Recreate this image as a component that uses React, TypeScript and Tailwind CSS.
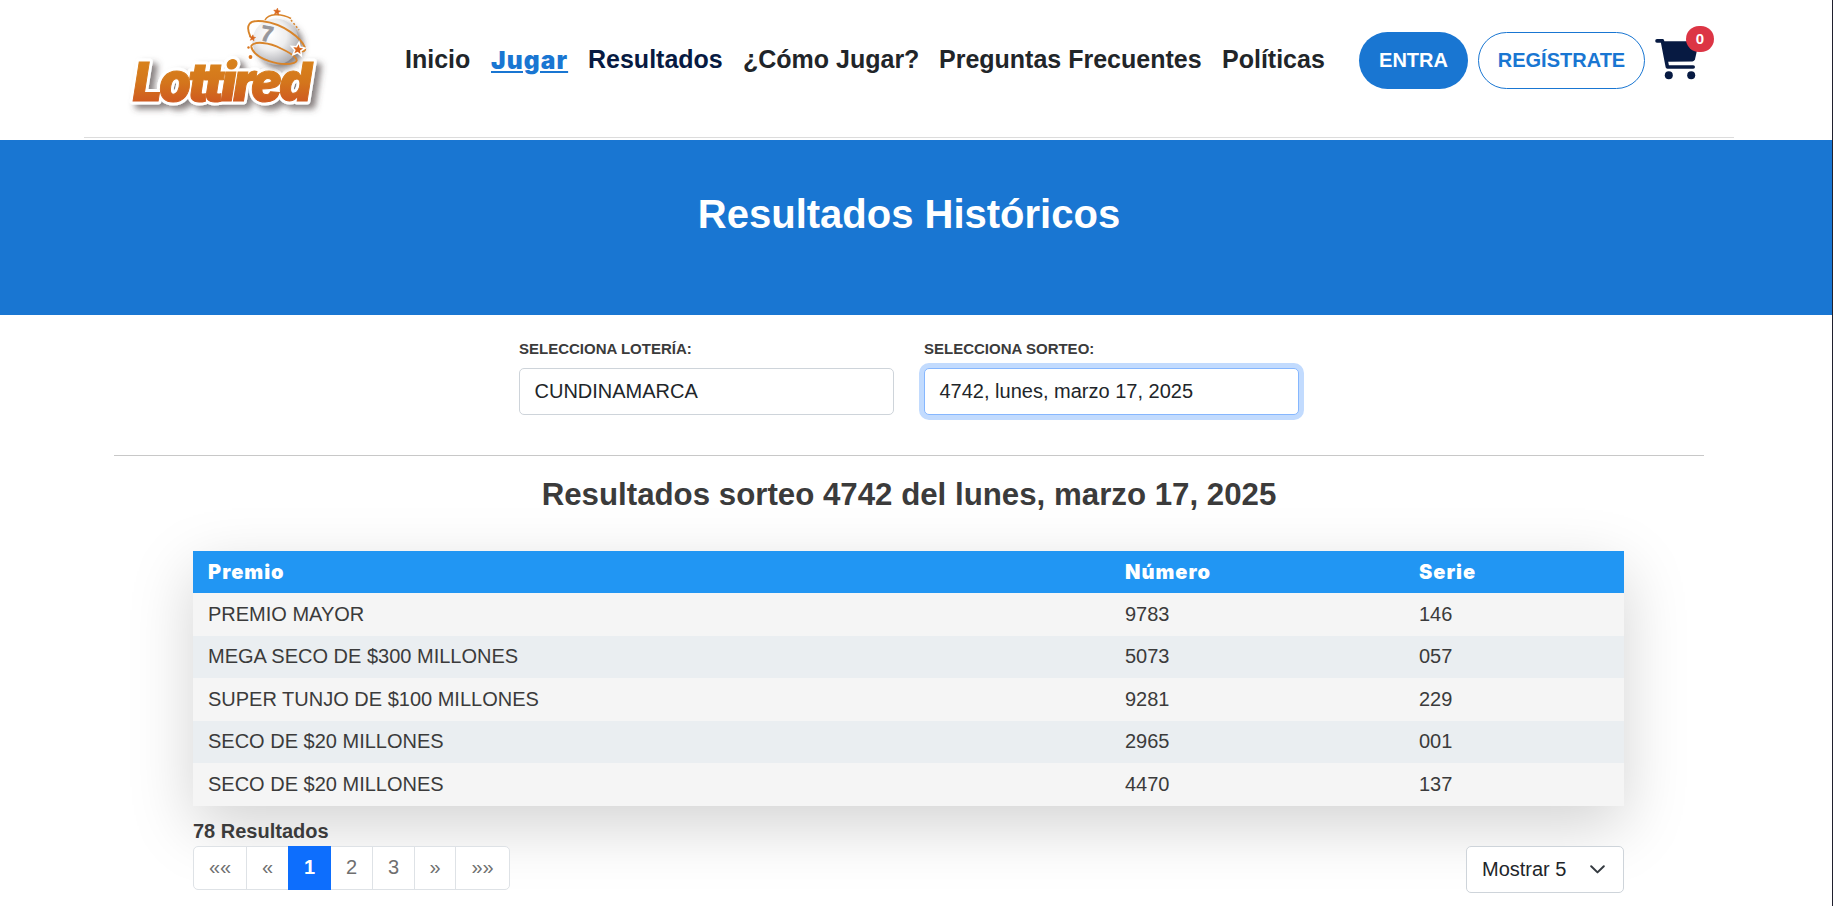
import React from "react";

type Row = { premio: string; numero: string; serie: string };

const rows: Row[] = [
  { premio: "PREMIO MAYOR", numero: "9783", serie: "146" },
  { premio: "MEGA SECO DE $300 MILLONES", numero: "5073", serie: "057" },
  { premio: "SUPER TUNJO DE $100 MILLONES", numero: "9281", serie: "229" },
  { premio: "SECO DE $20 MILLONES", numero: "2965", serie: "001" },
  { premio: "SECO DE $20 MILLONES", numero: "4470", serie: "137" },
];

function Star({ x, y, r, outline }: { x: number; y: number; r: number; outline?: boolean }) {
  return (
    <path
      transform={`translate(${x} ${y}) scale(${r}) rotate(8)`}
      d="M0-1 .26-.36 .95-.31 .42 .14 .59 .81 0 .45-.59 .81-.42 .14-.95-.31-.26-.36Z"
      fill="#d8661c"
      stroke={outline ? "#fff" : "#d8661c"}
      strokeWidth={outline ? 0.6 : 0.15}
      paintOrder="stroke"
    />
  );
}

function Logo() {
  return (
    <svg width="200" height="130" viewBox="128 0 200 130" className="shrink-0 overflow-visible" aria-label="Lottired">
      <defs>
        <linearGradient id="word" x1="0" y1="62" x2="0" y2="102" gradientUnits="userSpaceOnUse">
          <stop offset="0" stopColor="#d8821c" />
          <stop offset="0.5" stopColor="#d4761c" />
          <stop offset="1" stopColor="#cf5a20" />
        </linearGradient>
        <radialGradient id="ball" cx="0.4" cy="0.35" r="0.68">
          <stop offset="0" stopColor="#ffffff" />
          <stop offset="0.5" stopColor="#eeeeef" />
          <stop offset="1" stopColor="#adadb2" />
        </radialGradient>
        <filter id="soft" x="-20%" y="-30%" width="150%" height="180%">
          <feDropShadow dx="5" dy="4.5" stdDeviation="3" floodColor="#4a4040" floodOpacity="0.65" />
        </filter>
      </defs>
      <g filter="url(#soft)">
        <text
          x="133"
          y="100.8"
          textLength="176"
          lengthAdjust="spacingAndGlyphs"
          letterSpacing="-3"
          fontFamily="Inter"
          fontWeight="900"
          fontStyle="italic"
          fontSize="53.5"
          fill="#fff"
          stroke="#fff"
          strokeWidth="7"
          strokeLinejoin="round"
        >
          Lottired
        </text>
      </g>
      <g filter="url(#soft)">
        <circle cx="275.5" cy="41.5" r="23" fill="url(#ball)" />
      </g>
      <text
        x="133"
        y="100.8"
        textLength="176"
        lengthAdjust="spacingAndGlyphs"
        letterSpacing="-3"
        fontFamily="Inter"
        fontWeight="900"
        fontStyle="italic"
        fontSize="53.5"
        fill="url(#word)"
        stroke="url(#word)"
        strokeWidth="1"
      >
        Lottired
      </text>
      <text
        x="261"
        y="41.5"
        fontFamily="Liberation Sans"
        fontWeight="700"
        fontSize="22"
        fill="#97979c"
        stroke="#97979c"
        strokeWidth="0.8"
        transform="rotate(10 268 34)"
      >
        7
      </text>
      <g fill="none" stroke="#d8842a" strokeWidth="1.9">
        <path d="M250.5 37C245 25 249 19.5 263 21.3C284 24 301 38 305 47.5C306 51 303 52.5 299 50.5" />
        <path d="M251 46C254 41 269 42 281 48.5C296 55.5 300 61 294 62.8C282 66.5 254 60 251 46" />
        <path d="M265 20C268 14 280 12.5 291 18.5" strokeWidth="1.5" />
        <path d="M291 20L299 30" strokeDasharray="2 2" strokeWidth="1.5" />
      </g>
      <Star x={277} y={11.7} r={3.6} />
      <Star x={252.5} y={38} r={3.2} />
      <Star x={298} y={49.5} r={5.2} outline />
      <circle cx="250.5" cy="57" r="1.9" fill="#d8741c" />
      <circle cx="248.5" cy="47.5" r="1.2" fill="#d8741c" />
    </svg>
  );
}

function Cart() {
  return (
    <svg width="46" height="42" viewBox="0 0 46 42" className="block">
      <path
        d="M2 1.9H7.4L12.4 28H38.2"
        fill="none"
        stroke="#071a42"
        strokeWidth="3.6"
        strokeLinecap="round"
        strokeLinejoin="round"
      />
      <path d="M8 2.2H44L40 20.2Q39.4 22.2 37.4 22.4L12.5 22.8Z" fill="#071a42" />
      <circle cx="13.8" cy="36.2" r="4" fill="#071a42" />
      <circle cx="36.2" cy="36.2" r="4" fill="#071a42" />
    </svg>
  );
}

function Field({ label, value, focused }: { label: string; value: string; focused?: boolean }) {
  return (
    <div className="w-[375px]">
      <div className="h-[22px] text-[15px] leading-[22px] font-bold text-[#3b3b3b]">{label}</div>
      <div
        className={
          focused
            ? "mt-2 h-[47px] rounded-[5px] border border-[#86b7fe] bg-white px-[14.5px] text-[20px] leading-[45px] text-[#212529] shadow-[0_0_0_5px_#c2dbfe]"
            : "mt-2 h-[47px] rounded-[5px] border border-[#ced4da] bg-white px-[14.5px] text-[20px] leading-[45px] text-[#212529]"
        }
      >
        {value}
      </div>
    </div>
  );
}

export default function App() {
  return (
    <div className="h-[906px] w-[1833px] overflow-hidden border-r border-[#20202e] bg-white font-['Liberation_Sans',Arial,sans-serif] text-[#3b3b3b]">
      <header className="ml-[84px] flex h-[138px] w-[1650px] items-start border-b border-[#dcdcdc] pl-[44px]">
        <Logo />
        <nav className="ml-[77px] flex h-[120px] shrink-0 items-center text-[25px] font-bold whitespace-nowrap text-[#212529]">
          <a className="w-[86px]">Inicio</a>
          <a className="w-[97px] font-['Inter'] text-[24.5px] font-black tracking-[1.1px] text-[#1976d2] underline decoration-2 underline-offset-2">Jugar</a>
          <a className="w-[155px] text-[#071a42]">Resultados</a>
          <a className="w-[196px]">¿Cómo Jugar?</a>
          <a className="w-[283px]">Preguntas Frecuentes</a>
          <a className="w-[137px]">Políticas</a>
        </nav>
        <div className="mt-8 flex shrink-0 text-[20px] font-bold">
          <button className="h-[57px] w-[109px] rounded-full bg-[#1976d2] pb-[2px] text-white">ENTRA</button>
          <button className="ml-[10px] h-[57px] w-[167px] rounded-full border border-[#1976d2] pb-[2px] text-[#1976d2]">REGÍSTRATE</button>
          <div className="relative mt-[7px] ml-[10px]">
            <Cart />
            <span className="absolute -top-[13px] left-[31px] flex h-[26px] w-[28px] items-center justify-center rounded-full bg-[#dc3545] text-[15px] text-white">
              0
            </span>
          </div>
        </div>
      </header>

      <section className="mt-[2px] h-[175px] bg-[#1976d2]">
        <h1 className="w-[1818px] pt-[50px] text-center text-[40px] leading-[48px] font-bold text-white">Resultados Históricos</h1>
      </section>

      <main className="w-[1818px]">
        <div className="flex gap-[30px] pt-[23px] pl-[519px]">
          <Field label="SELECCIONA LOTERÍA:" value="CUNDINAMARCA" />
          <Field label="SELECCIONA SORTEO:" value="4742, lunes, marzo 17, 2025" focused />
        </div>
        <div className="mx-[114px] mt-10 border-t border-[#c8c8c8]" />
        <h2 className="mt-5 h-[38px] text-center text-[31.25px] leading-[38px] font-bold">
          Resultados sorteo 4742 del lunes, marzo 17, 2025
        </h2>

        <div className="mx-[193px] mt-[37px] w-[1431px]">
          <div className="text-[20px] shadow-[0_20px_60px_rgba(0,0,0,0.175)]">
            <div className="grid h-[42px] grid-cols-[917px_294px_220px] items-center bg-[#2196f3] pb-px font-['Inter'] text-[20px] font-black tracking-[1px] text-white">
              <div className="pl-[15px]">Premio</div>
              <div className="pl-[15px]">Número</div>
              <div className="pl-[15px]">Serie</div>
            </div>
            {rows.map((r, i) => (
              <div
                key={i}
                className={
                  i % 2 === 0
                    ? "grid h-[43px] grid-cols-[917px_294px_220px] items-center bg-[#f5f5f5] pb-px"
                    : "grid h-[42px] grid-cols-[917px_294px_220px] items-center bg-[#eaeef1] pb-[2px]"
                }
              >
                <div className="pl-[15px]">{r.premio}</div>
                <div className="pl-[15px]">{r.numero}</div>
                <div className="pl-[15px]">{r.serie}</div>
              </div>
            ))}
          </div>

          <div className="pt-[10px] text-[20px] leading-[30px] font-bold">78 Resultados</div>
          <div className="flex justify-between text-[20px]">
            <div className="flex h-11 w-[317px] rounded-[5px] border border-[#dee2e6] bg-white text-center leading-[41px] text-[#6f6f6f]">
              <div className="w-[53px] border-r border-[#dee2e6]">««</div>
              <div className="w-[41px]">«</div>
              <div className="-my-px w-[43px] bg-[#0d6efd] pt-px font-bold text-white">1</div>
              <div className="w-[42px] border-r border-[#dee2e6]">2</div>
              <div className="w-[42px] border-r border-[#dee2e6]">3</div>
              <div className="w-[41px] border-r border-[#dee2e6]">»</div>
              <div className="w-[53px]">»»</div>
            </div>
            <div className="flex h-[47px] w-[158px] items-center justify-between rounded-[5px] border border-[#ced4da] bg-white pr-[18px] pb-[2px] pl-[15px] text-[#212529]">
              Mostrar 5
              <svg width="15" height="9" viewBox="0 0 15 9" className="mt-[2px]">
                <path d="M1.2 1.2 7.5 7.4 13.8 1.2" fill="none" stroke="#343a40" strokeWidth="2" strokeLinecap="round" strokeLinejoin="round" />
              </svg>
            </div>
          </div>
        </div>
      </main>
    </div>
  );
}
